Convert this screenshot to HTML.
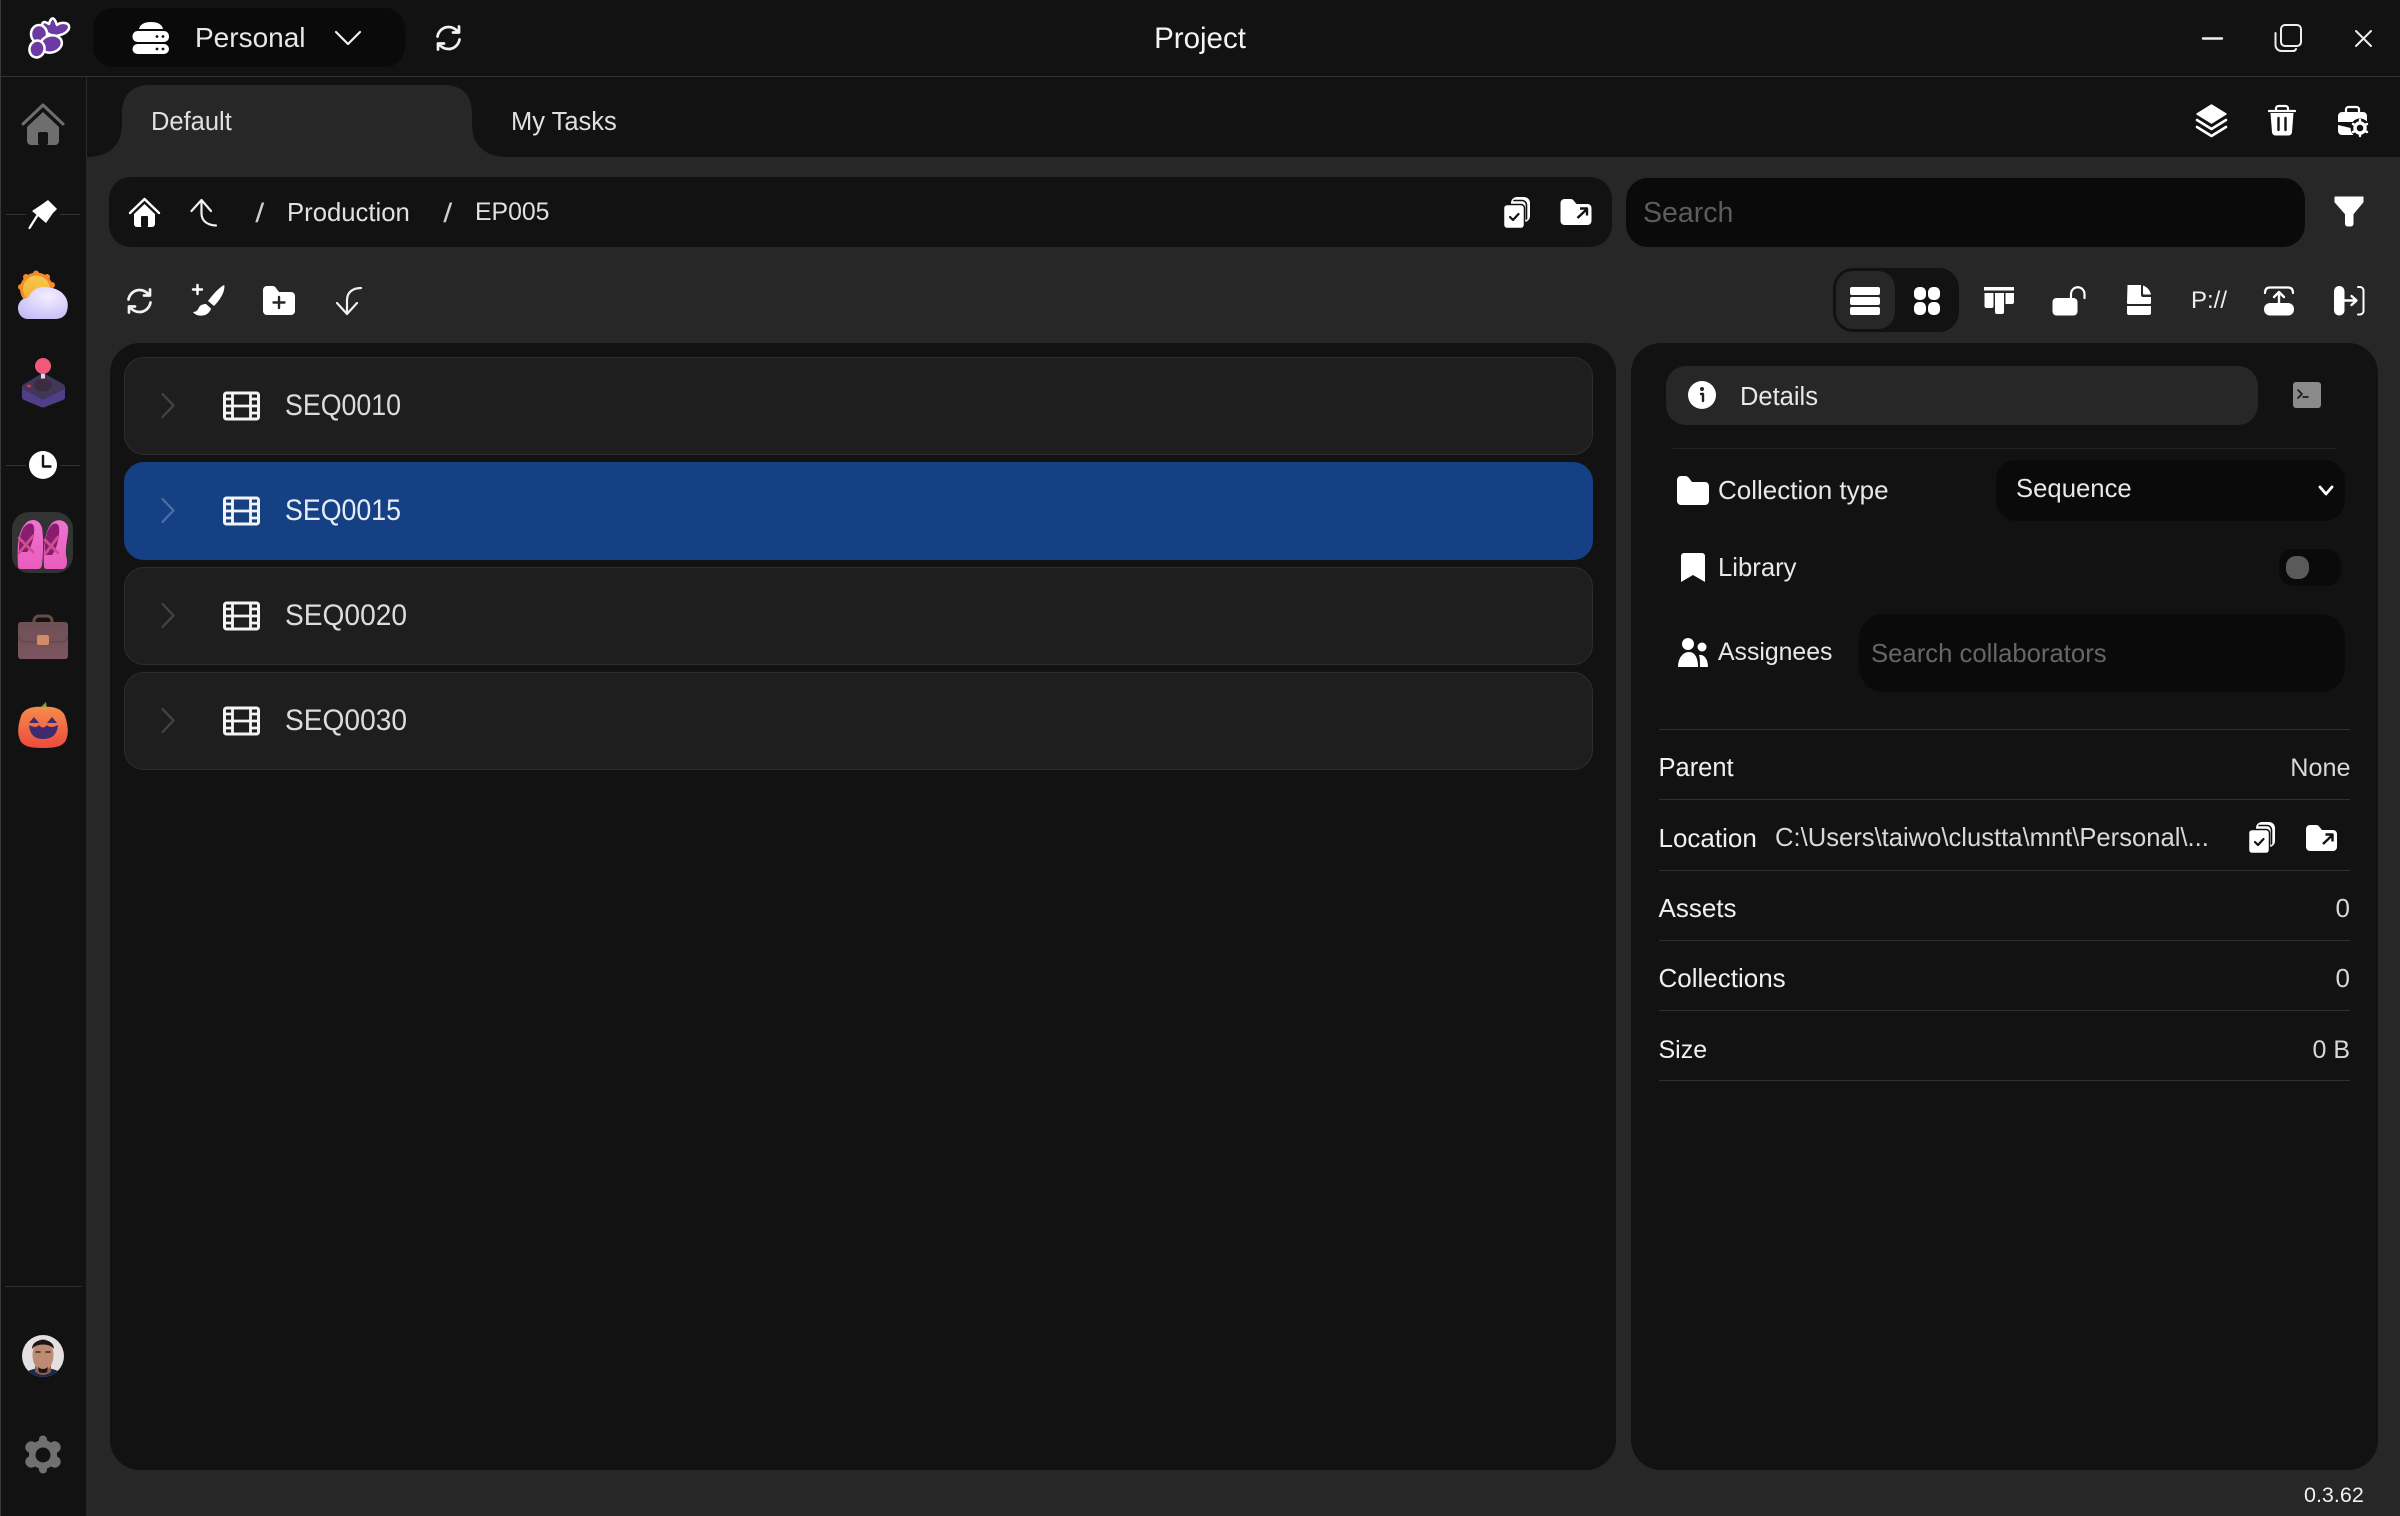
<!DOCTYPE html>
<html><head><meta charset="utf-8"><title>Project</title>
<style>
html,body{margin:0;padding:0;background:#272727}
#r{position:relative;width:2400px;height:1516px;overflow:hidden;background:#272727;font-family:"Liberation Sans",sans-serif;color:#eee}
.b{position:absolute}
.t{position:absolute;white-space:nowrap;line-height:40px;height:40px;font-size:26px}
.row{position:absolute;left:124px;width:1467px;height:96px;background:#1e1e1e;border:1px solid #2d2d2d;border-radius:20px}
.ln{position:absolute;left:1659px;width:691px;height:1px;background:#303030}
.sq{font-size:30px;color:#dcdcdc;left:285px;transform-origin:0 50%}
svg{position:absolute;left:0;top:0}
</style></head><body><div id="r">
<!-- chrome -->
<div class="b" style="left:0;top:0;width:2400px;height:76px;background:#121212"></div>
<div class="b" style="left:0;top:76px;width:2400px;height:1.5px;background:#333"></div>
<div class="b" style="left:0;top:77px;width:86px;height:1439px;background:#121212"></div>
<div class="b" style="left:0;top:0;width:1px;height:1516px;background:#383838"></div>
<div class="b" style="left:86px;top:77px;width:2314px;height:80px;background:#121212"></div>
<div class="b" style="left:86px;top:77px;width:1px;height:80px;background:#2a2a2a"></div>
<!-- tab -->
<svg width="2400" height="1516" viewBox="0 0 2400 1516" style="z-index:0"><path d="M87 157C108 157 122 146 122 124V113C122 95 132 85 150 85H444C462 85 472 95 472 113V124C472 146 486 157 507 157Z" fill="#272727"/></svg>
<!-- dropdown -->
<div class="b" style="left:93px;top:8px;width:312px;height:59px;background:#0a0a0a;border-radius:20px"></div>
<!-- breadcrumb + search -->
<div class="b" style="left:109px;top:177px;width:1503px;height:70px;background:#121212;border-radius:22px"></div>
<div class="b" style="left:1626px;top:178px;width:679px;height:69px;background:#0a0a0a;border-radius:22px"></div>
<!-- view toggle -->
<div class="b" style="left:1833px;top:268px;width:126px;height:64px;background:#121212;border-radius:20px"></div>
<div class="b" style="left:1836px;top:271px;width:59px;height:58px;background:#272727;border-radius:17px"></div>
<!-- panels -->
<div class="b" style="left:110px;top:343px;width:1506px;height:1127px;background:#121212;border-radius:30px"></div>
<div class="b" style="left:1631px;top:343px;width:747px;height:1127px;background:#121212;border-radius:30px"></div>
<!-- rows -->
<div class="row" style="top:357px"></div>
<div class="row" style="top:462px;background:#154084;border-color:#154084"></div>
<div class="row" style="top:567px"></div>
<div class="row" style="top:672px"></div>
<!-- details -->
<div class="b" style="left:1666px;top:366px;width:592px;height:59px;background:#272727;border-radius:20px"></div>
<div class="ln" style="left:1673px;width:664px;top:448px;background:#242424"></div>
<div class="b" style="left:1996px;top:460px;width:349px;height:61px;background:#0a0a0a;border-radius:20px"></div>
<div class="b" style="left:2279px;top:549px;width:62px;height:37px;background:#0a0a0a;border-radius:14px"></div>
<div class="b" style="left:2286px;top:556px;width:23px;height:23px;background:#5a5a5a;border-radius:10px"></div>
<div class="b" style="left:1859px;top:614px;width:486px;height:78px;background:#0a0a0a;border-radius:24px"></div>
<div class="ln" style="top:729px"></div>
<div class="ln" style="top:799px"></div>
<div class="ln" style="top:870px"></div>
<div class="ln" style="top:940px"></div>
<div class="ln" style="top:1010px"></div>
<div class="ln" style="top:1080px"></div>
<!-- sidebar lines -->
<div class="b" style="left:6px;top:214px;width:20px;height:1px;background:#333"></div>
<div class="b" style="left:60px;top:214px;width:20px;height:1px;background:#333"></div>
<div class="b" style="left:6px;top:465px;width:20px;height:1px;background:#333"></div>
<div class="b" style="left:60px;top:465px;width:20px;height:1px;background:#333"></div>
<div class="b" style="left:5px;top:1286px;width:77px;height:1px;background:#2e2e2e"></div>
<div class="b" style="left:12px;top:512px;width:61px;height:61px;background:#333;border-radius:17px"></div>

<!-- text -->
<div class="t" style="left:195px;top:18px;font-size:28px;color:#e8e8e8">Personal</div>
<div class="t" style="left:1200px;top:18.500px;font-size:29.500px;transform:translateX(-50%);color:#f4f4f4">Project</div>
<div class="t" style="left:151px;top:102px;font-size:25.500px;color:#e0e0e0">Default</div>
<div class="t" style="left:511px;top:102px;font-size:25.500px;color:#e0e0e0">My Tasks</div>
<div class="t" style="left:256px;top:193px;font-size:27px;color:#cfcfcf;transform:scaleX(1.2)">/</div>
<div class="t" style="left:287px;top:193px;font-size:25.700px;color:#e0e0e0">Production</div>
<div class="t" style="left:444px;top:193px;font-size:27px;color:#cfcfcf;transform:scaleX(1.2)">/</div>
<div class="t" style="left:475px;top:193px;font-size:24.800px;color:#e0e0e0">EP005</div>
<div class="t" style="left:1643px;top:192.500px;font-size:28.500px;color:#5c5c5c">Search</div>
<div class="t" style="left:2191px;top:281px;font-size:24px;color:#eee">P://</div>
<div class="t sq" style="top:386px;transform:scaleX(.892)">SEQ0010</div>
<div class="t sq" style="top:491px;transform:scaleX(.892);color:#e6ecf6">SEQ0015</div>
<div class="t sq" style="top:596px;transform:scaleX(.938)">SEQ0020</div>
<div class="t sq" style="top:701px;transform:scaleX(.938)">SEQ0030</div>
<div class="t" style="left:1740px;top:377px;font-size:25.500px;color:#e8e8e8">Details</div>
<div class="t" style="left:1718px;top:470px;font-size:26px;color:#e8e8e8">Collection type</div>
<div class="t" style="left:2016px;top:469px;font-size:25.700px;color:#e8e8e8">Sequence</div>
<div class="t" style="left:1718px;top:548px;font-size:25.700px;color:#e8e8e8">Library</div>
<div class="t" style="left:1718px;top:633px;font-size:24.800px;color:#e8e8e8">Assignees</div>
<div class="t" style="left:1871px;top:634px;font-size:25.700px;color:#666">Search collaborators</div>
<div class="t" style="left:1658.500px;top:748px;font-size:25.500px;color:#f0f0f0">Parent</div>
<div class="t" style="right:49.500px;top:748px;font-size:25.200px;color:#d8d8d8">None</div>
<div class="t" style="left:1658.500px;top:818px;font-size:26px;color:#f0f0f0">Location</div>
<div class="t" style="left:1775px;top:818px;font-size:25.600px;color:#d8d8d8">C:\Users\taiwo\clustta\mnt\Personal\...</div>
<div class="t" style="left:1658.500px;top:888px;font-size:26px;color:#f0f0f0">Assets</div>
<div class="t" style="right:50px;top:888px;font-size:26px;color:#d8d8d8">0</div>
<div class="t" style="left:1658.500px;top:958px;font-size:26px;color:#f0f0f0">Collections</div>
<div class="t" style="right:50px;top:958px;font-size:26px;color:#d8d8d8">0</div>
<div class="t" style="left:1658.500px;top:1030px;font-size:25px;color:#f0f0f0">Size</div>
<div class="t" style="right:50px;top:1030px;font-size:25px;color:#d8d8d8">0 B</div>
<div class="t" style="left:2304px;top:1475px;font-size:21.500px;color:#f0f0f0">0.3.62</div>

<!-- icons -->
<svg width="2400" height="1516" viewBox="0 0 2400 1516" fill="none" stroke-linecap="round" stroke-linejoin="round">
<defs>
<linearGradient id="sun" x1="0" y1="0" x2="0" y2="1"><stop offset="0" stop-color="#f8c84e"/><stop offset="1" stop-color="#f0b02c"/></linearGradient>
<radialGradient id="cl" cx=".6" cy=".3" r=".8"><stop offset="0" stop-color="#f3eeff"/><stop offset="1" stop-color="#c4baf5"/></radialGradient>
<linearGradient id="pk" x1="0" y1="0" x2="0" y2="1"><stop offset="0" stop-color="#f68c4c"/><stop offset="1" stop-color="#ec4a3e"/></linearGradient>
<linearGradient id="sh" x1="0" y1="0" x2="0" y2="1"><stop offset="0" stop-color="#ee74d0"/><stop offset="1" stop-color="#ea5cbe"/></linearGradient>
<linearGradient id="bc" x1="0" y1="0" x2="0" y2="1"><stop offset="0" stop-color="#6e5055"/><stop offset="1" stop-color="#7c5560"/></linearGradient>
<g id="rf"><path d="M3 12.500C4 7 8.500 3 14 3C18 3 21.500 5 24 8.500M24.500 2.500V8.500H18.500M25 15.500C24 21 19.500 25 14 25C10 25 6.500 23 4 19.500M3.500 25.500V19.500H9.500" stroke="#f2f2f2" stroke-width="2.700"/></g>
<g id="film"><rect x="1.500" y="1.500" width="34" height="26" rx="2" stroke-width="3" stroke="#f4f4f4"/><path d="M9.500 1V28M27.500 1V28M9.500 14.500H27.500M1 7.500H9.500M1 14.500H9.500M1 21.500H9.500M27.500 7.500H36M27.500 14.500H36M27.500 21.500H36" stroke="#f4f4f4" stroke-width="2.800" stroke-linecap="butt"/></g>
<g id="cp"><rect x="8" y="0" width="19" height="25" rx="6" fill="#fff"/><path d="M11 3.500H19A4.500 4.500 0 0 1 23.500 8V22" stroke="#121212" stroke-width="1.600"/><rect x="0.500" y="7.500" width="21" height="24" rx="3.500" fill="#fff" stroke="#121212" stroke-width="1.500"/><path d="M7 20L10 23L15.500 17" stroke="#121212" stroke-width="2.200"/></g>
<g id="fo"><path d="M0 4A4 4 0 0 1 4 0H10A4 4 0 0 1 13.500 2L16 5H27A4 4 0 0 1 31 9V22A4 4 0 0 1 27 26H4A4 4 0 0 1 0 22Z" fill="#fff"/><path d="M17 19L26 10.500M19.500 9.500H26.500V16.500" stroke="#121212" stroke-width="2.400" stroke-linecap="butt"/></g>
</defs>

<!-- logo -->
<g fill="#6c3aa2" stroke="#fff" stroke-width="2.500">
<path d="M42 24C44 20 47 23 49 24C50 20 52 17 54 19C56 21 56 23 57 25C60 22 68 22 69 26C70 30 65 34 60 35C52 38 44 33 42 24Z"/>
<ellipse cx="39" cy="34" rx="8" ry="9"/>
<ellipse cx="51" cy="44" rx="11" ry="8.500" transform="rotate(-15 51 44)"/>
<ellipse cx="37" cy="49" rx="7.500" ry="8.500" transform="rotate(15 37 49)"/>
</g>
<!-- server -->
<path d="M139 29C140 24 145 22 151 22C157 22 162 24 163 29Z" fill="#fff"/>
<rect x="132.500" y="31" width="36.500" height="11" rx="5" fill="#fff"/><rect x="132.500" y="44" width="36.500" height="10" rx="5" fill="#fff"/>
<g fill="#111"><circle cx="157" cy="36.500" r="1.400"/><circle cx="163" cy="36.500" r="1.400"/><circle cx="157" cy="49" r="1.400"/><circle cx="163" cy="49" r="1.400"/></g>
<path d="M336 32L348 44L360 32" stroke="#f0f0f0" stroke-width="2.200"/>
<use href="#rf" x="434.500" y="24"/>
<!-- window -->
<path d="M2203 38.500H2222" stroke="#eee" stroke-width="2.400"/>
<rect x="2281" y="25" width="20" height="21" rx="4" stroke="#eee" stroke-width="2"/>
<path d="M2275.500 33V45A6 6 0 0 0 2281.500 51H2293A3 3 0 0 0 2296 49" stroke="#eee" stroke-width="2"/>
<path d="M2356 31L2371 46M2371 31L2356 46" stroke="#eee" stroke-width="2"/>
<!-- tab actions -->
<path d="M2211.500 105L2226 114L2211.500 123L2197 114Z" fill="#fff" stroke="#fff" stroke-width="1.500"/>
<path d="M2197 120L2211.500 129L2226 120M2197 127L2211.500 136L2226 127" stroke="#fff" stroke-width="2.600"/>
<path d="M2269 111H2295M2276 110V108A2.500 2.500 0 0 1 2278.500 106H2285.500A2.500 2.500 0 0 1 2288 108V110" stroke="#fff" stroke-width="2.200"/>
<path d="M2270.500 113H2293.500L2292 132A3.500 3.500 0 0 1 2288.500 135.500H2275.500A3.500 3.500 0 0 1 2272 132Z" fill="#fff"/>
<path d="M2278.500 118V130M2285.500 118V130" stroke="#121212" stroke-width="2.400"/>
<path d="M2346 112V109A2.500 2.500 0 0 1 2348.500 107H2356.500A2.500 2.500 0 0 1 2359 109V112" stroke="#fff" stroke-width="2.200"/>
<path d="M2338 116A4 4 0 0 1 2342 112H2363A4 4 0 0 1 2367 116V122H2338ZM2338 125L2355 129V135H2342A4 4 0 0 1 2338 131Z" fill="#fff"/>
<circle cx="2360" cy="128" r="9.500" fill="#121212"/><circle cx="2360" cy="128" r="5" stroke="#fff" stroke-width="3.400"/>
<path d="M2360 120V122M2360 134V136M2353 124L2355 125M2365 131L2367 132M2353 132L2355 131M2365 125L2367 124" stroke="#fff" stroke-width="2.400"/>
<!-- breadcrumb -->
<path d="M130 213L144.500 199L159 213" stroke="#fff" stroke-width="2.400"/>
<path d="M134 214L144.500 204L155 214V224A3 3 0 0 1 152 227H137A3 3 0 0 1 134 224Z" fill="#fff"/><rect x="141" y="216" width="7" height="11" rx="1" fill="#121212"/>
<path d="M191.500 211L201.500 200L211 211M201.500 201V213C201.500 220 206 225 216 225.500" stroke="#f0f0f0" stroke-width="2.200"/>
<use href="#cp" x="1503" y="197"/>
<use href="#fo" x="1560.500" y="199"/>
<!-- filter -->
<path d="M2335 197H2363V202L2353 214V224A2.500 2.500 0 0 1 2350.500 226H2348A2.500 2.500 0 0 1 2345.500 224V214L2335 202Z" fill="#fff" stroke="#fff" stroke-width="1"/>
<!-- toolbar left -->
<use href="#rf" x="125.500" y="287"/>
<path d="M197.500 285V294M193 289.500H202" stroke="#fff" stroke-width="2.400"/>
<path d="M224 285.500C224.500 292 220 299 214 305.500L208.500 301C213 295 218 289 224 285.500Z" fill="#fff" stroke="#fff" stroke-width=".8"/>
<path d="M206 304L211 308.500C210 313 205 316.500 199 315.500C195 315 193 312 193 312C197 312 198 309 199 307.500C200 305 203 304 206 304Z" fill="#fff"/>
<path d="M263 290A4 4 0 0 1 267 286H273A4 4 0 0 1 276 288L279 292H291A4 4 0 0 1 295 296V311A4 4 0 0 1 291 315H267A4 4 0 0 1 263 311Z" fill="#fff"/>
<path d="M279 297V308M273.500 302.500H284.500" stroke="#272727" stroke-width="2.400"/>
<path d="M361 288C352 288 347 293 347 300V313M337 303L347 314L357 303" stroke="#f0f0f0" stroke-width="2.200"/>
<!-- view icons -->
<g fill="#fff"><rect x="1850" y="287" width="30" height="8" rx="2"/><rect x="1850" y="297" width="30" height="8" rx="2"/><rect x="1850" y="307" width="30" height="8" rx="2"/>
<rect x="1914" y="287" width="12" height="13" rx="5"/><rect x="1928" y="287" width="12" height="13" rx="5"/><rect x="1914" y="302" width="12" height="13" rx="5"/><rect x="1928" y="302" width="12" height="13" rx="5"/>
<rect x="1984" y="287" width="30" height="3.500"/><path d="M1984.500 293H1993.500V306A2 2 0 0 1 1991.500 308H1986.500A2 2 0 0 1 1984.500 306ZM1995 293H2004V312A2 2 0 0 1 2002 314H1997A2 2 0 0 1 1995 312ZM2005.500 293H2014V302A2 2 0 0 1 2012 304H2005.500Z"/>
<rect x="2052.500" y="298" width="25" height="17.500" rx="4"/>
<path d="M2127.500 285H2141V295A2 2 0 0 0 2143 297H2151V303A1 1 0 0 1 2150 304H2128A1 1 0 0 1 2127 303ZM2143 285.500C2147 287 2150 290 2151 294.500H2144A1 1 0 0 1 2143 293.500ZM2127 306H2151V313A2 2 0 0 1 2149 315H2129A2 2 0 0 1 2127 313Z"/>
<rect x="2264" y="303" width="30" height="12.500" rx="6"/>
<rect x="2334" y="286" width="10.500" height="29.500" rx="5"/></g>
<path d="M2071 298V294A6.700 6.700 0 0 1 2084.500 294V298" stroke="#fff" stroke-width="2.200"/>
<path d="M2265 293C2265 289 2267 287.500 2270 287.500H2288C2291 287.500 2293 289 2293 293" stroke="#fff" stroke-width="2.200"/>
<path d="M2279 303V293M2274 297L2279 292L2284 297" stroke="#fff" stroke-width="2.400"/>
<path d="M2345 300.500H2356M2351.500 296L2356.500 300.500L2351.500 305" stroke="#fff" stroke-width="2.400"/>
<path d="M2358 287H2360A3.500 3.500 0 0 1 2363.500 290.500V311A3.500 3.500 0 0 1 2360 314.500H2358" stroke="#fff" stroke-width="2"/>
<!-- list -->
<path d="M162.500 394L173.500 405.500L162.500 417" stroke="#444" stroke-width="2.200"/>
<path d="M162.500 499L173.500 510.500L162.500 522" stroke="#4e6ea6" stroke-width="2.200"/>
<path d="M162.500 604L173.500 615.500L162.500 627" stroke="#444" stroke-width="2.200"/>
<path d="M162.500 709L173.500 720.500L162.500 732" stroke="#444" stroke-width="2.200"/>
<use href="#film" x="223" y="391.500"/><use href="#film" x="223" y="496.500"/><use href="#film" x="223" y="601.500"/><use href="#film" x="223" y="706.500"/>
<!-- details -->
<circle cx="1702" cy="395" r="14" fill="#fff"/><circle cx="1702" cy="389" r="2" fill="#222"/><path d="M1701 394H1703V401" stroke="#222" stroke-width="2.400"/>
<rect x="2293" y="382" width="28" height="26" rx="3" fill="#8a8a8a"/><path d="M2298 390L2302 394L2298 398M2303 397H2308" stroke="#1b1b1b" stroke-width="1.700"/>
<path d="M1677 480A4 4 0 0 1 1681 476H1685C1687 476 1688 477 1689 478L1692 482H1705A4 4 0 0 1 1709 486V501A4 4 0 0 1 1705 505H1681A4 4 0 0 1 1677 501Z" fill="#fff"/>
<path d="M2320 487L2326 494L2332 487" stroke="#fff" stroke-width="2.800"/>
<path d="M1681 556A3 3 0 0 1 1684 553H1702A3 3 0 0 1 1705 556V582L1693 575L1681 582Z" fill="#fff"/>
<circle cx="1688" cy="644" r="6" fill="#fff"/><circle cx="1702" cy="647" r="4.500" fill="#fff"/>
<path d="M1678 667C1678 658 1683 652 1689 652C1695 652 1698 658 1698 667Z" fill="#fff"/>
<path d="M1699 655C1704 654 1708 659 1708 667H1700C1700 662 1700 658 1699 655Z" fill="#fff"/>
<use href="#cp" x="2248" y="822"/>
<use href="#fo" x="2306" y="825"/>
<!-- sidebar icons -->
<path d="M23 124L43 105L63 124" stroke="#6e6e6e" stroke-width="3"/>
<path d="M27 127L43 112L59 127V141A4 4 0 0 1 55 145H31A4 4 0 0 1 27 141Z" fill="#6e6e6e"/><rect x="38" y="132" width="10" height="13" rx="2" fill="#121212"/>
<path d="M48 200L57 209L53 213L46 223L32 211L41 205Z" fill="#fff"/><path d="M37 216L29.500 228" stroke="#fff" stroke-width="2.200"/>
<!-- weather -->
<circle cx="36.500" cy="289" r="16.500" fill="#f48a2a"/>
<g fill="#f48a2a"><circle cx="36" cy="273.500" r="3"/><circle cx="26" cy="277" r="3"/><circle cx="47" cy="277" r="3"/><circle cx="21" cy="287" r="3"/><circle cx="52" cy="285" r="3"/></g>
<circle cx="36.500" cy="289" r="13.500" fill="url(#sun)"/>
<path d="M28 319C22 319 18 314 18 308C18 302 23 297.500 28 298C31 291 37 287 43 287C53 287 62 290 66 298C69 303 68 311 65 315C62 318 59 319 55 319Z" fill="url(#cl)"/>
<!-- joystick -->
<path d="M22 387V397Q22 399 24 400L41 407Q43 408 45 407L63 400Q65 399 65 397V387Z" fill="#503f88"/>
<path d="M22 387Q22 385 24 384L41 374Q43 373 45 374L63 384Q65 385 65 387Q65 389 63 390L45 399Q43 400 41 399L24 390Q22 389 22 387Z" fill="#40375a"/>
<rect x="41" y="372" width="4" height="12" fill="#e0d0f0"/>
<ellipse cx="43" cy="385" rx="9" ry="6.500" fill="#3c2c3e"/>
<circle cx="43" cy="366" r="8" fill="#f05a78"/>
<ellipse cx="29" cy="386" rx="2.200" ry="1.400" fill="#e02c58"/>
<!-- clock -->
<circle cx="43" cy="465" r="14" fill="#fff"/><path d="M43 456V466.500H50.500" stroke="#111" stroke-width="2.400"/>
<!-- ballet shoes -->
<path d="M18 566C17 545 18 530 27 522C33 518 40 520 42 528C44 540 43 555 42 565C41.500 568 40 569 38 569H21C19 569 18 568 18 566Z" fill="url(#sh)"/>
<path d="M19 552C19 538 21 527 28 524C33 522 35 526 34 533C33 541 31 548 27 552Z" fill="#8a1c70"/>
<path d="M19 538L33 552M33 536L19 553" stroke="#cc4f90" stroke-width="2.800"/>
<path d="M44 566C43 548 45 530 52 523C58 518 66 520 68 527C69 534 65 545 66 555C68 563 67 568 63 569H47C45 569 44 568 44 566Z" fill="url(#sh)"/>
<path d="M45 555C44 540 47 528 53 524C58 522 60 526 59 534C58 542 56 550 52 555Z" fill="#8a1c70"/>
<path d="M45 540L58 553M58 537L45 554" stroke="#cc4f90" stroke-width="2.800"/>
<!-- briefcase -->
<path d="M34 624V621A5 5 0 0 1 39 616H47A5 5 0 0 1 52 621V624" stroke="#6a4a45" stroke-width="3"/>
<rect x="18" y="622" width="50" height="37" rx="3" fill="url(#bc)"/>
<path d="M19 637Q19 642 26 642H60Q67 642 67 637" stroke="#5e4348" stroke-width="1"/>
<rect x="37" y="635" width="12" height="10" rx="2" fill="#cf8c66"/>
<!-- pumpkin -->
<path d="M40 708L46 702L47 709Z" fill="#7ca33a"/>
<path d="M43 707C52 706 62 708 65 716C68 725 69 733 66 740C63 746 57 748 43 748C29 748 23 746 20 740C17 733 18 725 21 716C24 708 34 706 43 707Z" fill="url(#pk)"/>
<path d="M29 725Q36 729 39 725Q43 730 47 725Q50 729 58 725Q57 739 43 739Q30 739 29 725Z" fill="#3f2a70"/>
<path d="M29 723L34 717L39 723ZM47 723L52 717L57 723Z" fill="#3f2a70"/>
<!-- avatar -->
<circle cx="43" cy="1356" r="21" fill="#e4e0e2"/>
<clipPath id="av"><circle cx="43" cy="1356" r="21"/></clipPath>
<g clip-path="url(#av)">
<ellipse cx="43" cy="1377" rx="20" ry="9" fill="#16284c"/>
<path d="M35 1366H51V1372Q43 1378 35 1372Z" fill="#8a5c4c"/>
<ellipse cx="43" cy="1355" rx="10.500" ry="16" fill="#bd8a74"/>
<path d="M32 1349C32 1337 54 1337 54 1349C50 1343 36 1343 32 1349Z" fill="#1c1412"/>
<path d="M38 1367Q43 1371 48 1367L47 1372Q43 1374 39 1372Z" fill="#1c1412"/>
<path d="M36 1352H40M46 1352H50" stroke="#3a2a26" stroke-width="1.500"/>
</g>
<!-- gear -->
<path d="M43 1436A4 4 0 0 1 47 1440V1441L51 1443L52 1442.500C55 1441 58 1442 60 1445C61.500 1448 60.500 1451 58 1452.500L57 1453V1457L58 1457.500C60.500 1459 61.500 1462 60 1465C58 1468 55 1469 52 1467.500L51 1467L47 1469V1470A4 4 0 0 1 39 1470V1469L35 1467L34 1467.500C31 1469 28 1468 26 1465C24.500 1462 25.500 1459 28 1457.500L29 1457V1453L28 1452.500C25.500 1451 24.500 1448 26 1445C28 1442 31 1441 34 1442.500L35 1443L39 1441V1440A4 4 0 0 1 43 1436Z" fill="#707070" transform="translate(0 -0.500)"/>
<circle cx="43" cy="1455" r="7.500" fill="#121212"/>
</svg>
</div></body></html>
